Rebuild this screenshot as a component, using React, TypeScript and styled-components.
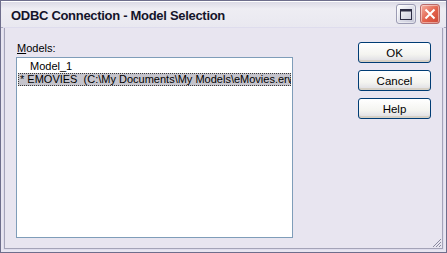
import styled, { createGlobalStyle } from "styled-components";

const Global = createGlobalStyle`
  html, body {
    margin: 0;
    padding: 0;
    background: #ffffff;
  }
  * {
    box-sizing: border-box;
  }
`;

const Window = styled.div`
  width: 447px;
  height: 253px;
  display: flex;
  flex-direction: column;
  border: 1px solid #6e6e8c;
  background: #e8e5f0;
  font-family: "Liberation Sans", Arial, sans-serif;
  font-size: 11px;
  color: #000;
`;

const TitleBar = styled.div`
  height: 27px;
  display: flex;
  align-items: center;
  padding: 0 6px 0 10px;
  background: linear-gradient(#d9d8e4, #eeedf3 30%, #e9e8f0);
  border-bottom: 1px solid #a9a8bd;
  box-shadow: inset 0 1px 0 #ffffff;
`;

const Title = styled.div`
  flex: 1;
  font-size: 13px;
  font-weight: bold;
  color: #14142a;
  letter-spacing: -0.3px;
  padding-top: 2px;
`;

const TitleButton = styled.div<{ $close?: boolean }>`
  width: 20px;
  height: 20px;
  margin-left: 4px;
  border-radius: 3px;
  display: flex;
  align-items: center;
  justify-content: center;
  border: 1px solid ${(p) => (p.$close ? "#b86a6a" : "#9b9bb3")};
  background: ${(p) =>
    p.$close
      ? "linear-gradient(135deg, #f4b0a2, #e2604a 55%, #cc4836)"
      : "linear-gradient(135deg, #ffffff, #d9dae6 60%, #c5c6d6)"};
  box-shadow: inset 0 0 0 1px rgba(255, 255, 255, 0.45);
`;

const Frame = styled.div`
  flex: 1;
  display: flex;
  flex-direction: column;
  margin: 0 3px 3px 3px;
  border: 1px solid #a4a3b8;
  border-top: none;
  box-shadow: 0 0 0 1px #dedced;
  position: relative;
`;

const Body = styled.div`
  flex: 1;
  display: flex;
  padding: 14px 11px 0 11px;
`;

const LeftCol = styled.div`
  display: flex;
  flex-direction: column;
  width: 277px;
`;

const Label = styled.div`
  height: 15px;
  line-height: 13px;
  padding-left: 1px;
  u {
    text-decoration: underline;
  }
`;

const ListBox = styled.div`
  height: 181px;
  background: #ffffff;
  border: 1px solid #7f9db9;
  padding: 2px 1px;
  overflow: hidden;
`;

const Item = styled.div<{ $selected?: boolean; $indent?: number }>`
  height: 13px;
  line-height: 13px;
  white-space: nowrap;
  overflow: hidden;
  padding-left: ${(p) => p.$indent ?? 2}px;
  background: ${(p) => (p.$selected ? "#c5c4cc" : "transparent")};
  outline: ${(p) => (p.$selected ? "1px dotted #3a3a3a" : "none")};
  outline-offset: -1px;
`;

const RightCol = styled.div`
  margin-left: auto;
  display: flex;
  flex-direction: column;
  gap: 7px;
`;

const Button = styled.button`
  width: 73px;
  height: 21px;
  border: 1px solid #003c74;
  border-radius: 3px;
  background: linear-gradient(#ffffff, #f4f4f0 60%, #dcdbe2);
  box-shadow: inset 0 -2px 0 #d6d0c5, inset 0 1px 0 #ffffff;
  font-family: "Liberation Sans", Arial, sans-serif;
  font-size: 11.5px;
  color: #000;
  padding: 0;
`;

const Grip = styled.svg`
  position: absolute;
  right: 0;
  bottom: 0;
`;

export default function App() {
  return (
    <>
      <Global />
      <Window>
        <TitleBar>
          <Title>ODBC Connection - Model Selection</Title>
          <TitleButton>
            <svg width="12" height="11" viewBox="0 0 12 11">
              <rect x="0.5" y="0.5" width="11" height="10" fill="none" stroke="#2c2c44" />
              <rect x="0.5" y="0.5" width="11" height="2" fill="#2c2c44" />
            </svg>
          </TitleButton>
          <TitleButton $close>
            <svg width="12" height="12" viewBox="0 0 12 12">
              <path d="M1.5 1.5 L10.5 10.5 M10.5 1.5 L1.5 10.5" stroke="#ffffff" strokeWidth="2" />
            </svg>
          </TitleButton>
        </TitleBar>
        <Frame>
          <Body>
            <LeftCol>
              <Label>
                <u>M</u>odels:
              </Label>
              <ListBox>
                <Item $indent={12}>Model_1</Item>
                <Item $selected>* EMOVIES&nbsp;&nbsp;(C:\My Documents\My Models\eMovies.erwi</Item>
              </ListBox>
            </LeftCol>
            <RightCol>
              <Button>OK</Button>
              <Button>Cancel</Button>
              <Button>Help</Button>
            </RightCol>
          </Body>
          <Grip width="12" height="12" viewBox="0 0 12 12">
            <path d="M11 3 L3 11 M11 6 L6 11 M11 9 L9 11" stroke="#8a8aa0" strokeWidth="1" />
          </Grip>
        </Frame>
      </Window>
    </>
  );
}
